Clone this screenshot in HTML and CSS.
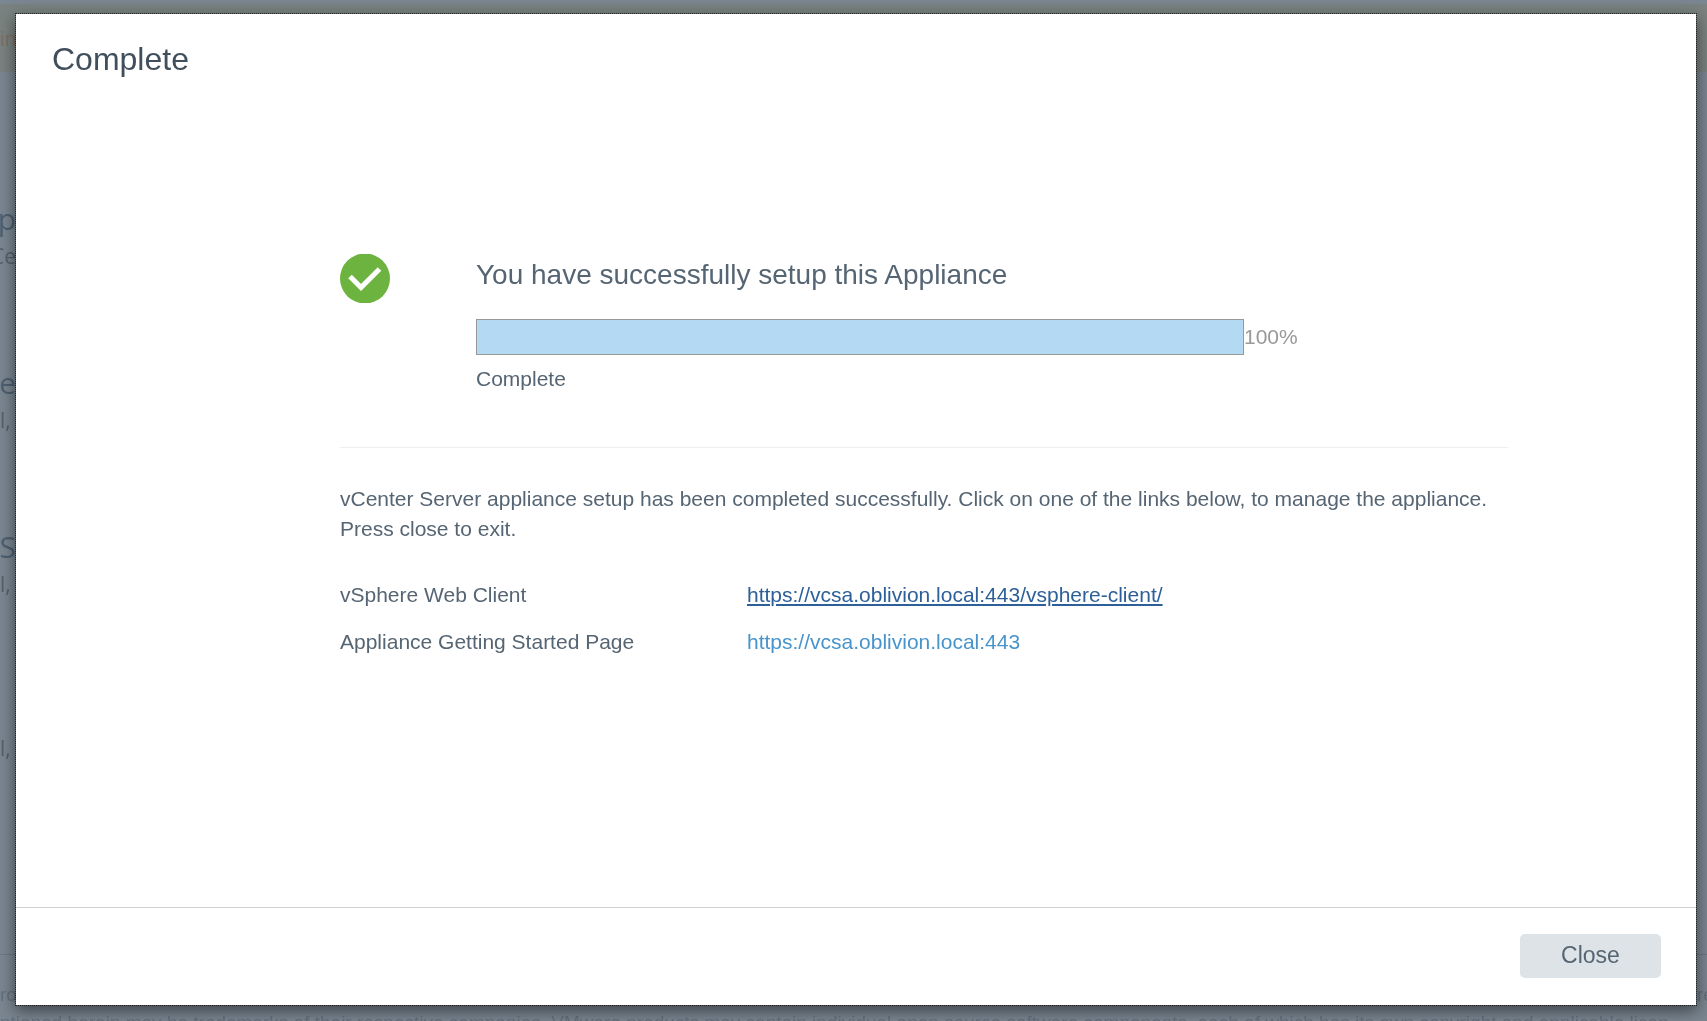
FILE: index.html
```html
<!DOCTYPE html>
<html lang="en">
<head>
<meta charset="utf-8">
<meta name="viewport" content="width=device-width, initial-scale=1">
<title>Complete</title>
<link rel="stylesheet" href="styles.css">
</head>
<body>
<div class="page" aria-hidden="true">
  <div class="banner">in</div>
  <div class="sections">
    <div class="section"><div class="heading">p</div><div class="detail detail-name">Ce</div></div>
    <div class="section"><div class="heading">e</div><div class="detail">l,</div></div>
    <div class="section"><div class="heading">S</div><div class="detail">l,</div></div>
    <div class="section"><div class="heading"></div><div class="detail">l,</div></div>
  </div>
  <div class="legal">
    <div class="legal-row"><span>ro</span><span class="legal-end">re</span></div>
    <div class="legal-text">ntioned herein may be trademarks of their respective companies. VMware products may contain individual open source software components, each of which has its own copyright and applicable licen</div>
  </div>
</div>

<div class="backdrop">
  <section class="modal" role="dialog" aria-modal="true" aria-labelledby="title">
    <header class="modal-header"><h1 id="title">Complete</h1></header>
    <main class="modal-body">
      <div class="status">
        <svg class="check" viewBox="0 0 50 49" aria-hidden="true">
          <ellipse cx="25" cy="24.5" rx="25" ry="25" fill="#6cb33f"/>
          <path d="M10 22.500L21 33.500L39.500 15" fill="none" stroke="#fff" stroke-width="5"/>
        </svg>
        <div class="status-info">
          <h2>You have successfully setup this Appliance</h2>
          <div class="progress">
            <div class="bar" role="progressbar" aria-label="Setup progress" aria-valuenow="100" aria-valuemin="0" aria-valuemax="100"><div class="fill" style="width: 100%"></div></div>
            <span class="percent">100%</span>
          </div>
          <p>Complete</p>
        </div>
      </div>
      <p class="message">vCenter Server appliance setup has been completed successfully. Click on one of the links below, to manage the appliance. Press close to exit.</p>
      <dl class="links">
        <dt>vSphere Web Client</dt>
        <dd><a class="active" href="https://vcsa.oblivion.local:443/vsphere-client/">https://vcsa.oblivion.local:443/vsphere-client/</a></dd>
        <dt>Appliance Getting Started Page</dt>
        <dd><a href="https://vcsa.oblivion.local:443">https://vcsa.oblivion.local:443</a></dd>
      </dl>
    </main>
    <footer class="modal-footer"><button type="button">Close</button></footer>
  </section>
</div>
</body>
</html>
```
FILE: styles.css
```css
* {
  box-sizing: border-box;
}

body {
  margin: 0;
  background: #7a8691;
  color: #566573;
  font: 21px/30px "Liberation Sans", Arial, sans-serif;
}

h1, h2, p, dl, dd {
  margin: 0;
  font-weight: 400;
}

/* Page behind the dialog */
.page {
  position: fixed;
  inset: 0;
  display: flex;
  flex-direction: column;
  overflow: hidden;
  padding-top: 4px;
  color: #566270;
}

.banner {
  height: 68px;
  padding-top: 20px;
  background: #7a8381;
  color: #806f63;
}

.sections {
  flex: 1;
  padding-top: 124px;
}

.section {
  height: 164px;
  font-family: "Open Sans", sans-serif;
}

.heading,
.detail-name {
  display: flex;
  justify-content: flex-end;
  width: 16px;
}

.heading {
  height: 45px;
  font-size: 30px;
  line-height: 46px;
  color: #4e6072;
}

.detail {
  color: #55606b;
}

.legal {
  height: 67px;
  padding-top: 26px;
  border-top: 1px solid #6c7884;
  font-size: 19px;
  line-height: 28px;
  color: #65717e;
}

.legal-row {
  display: flex;
  justify-content: space-between;
}

.legal-end {
  width: 10px;
}

.legal-text {
  white-space: nowrap;
}

/* Dialog */
.backdrop {
  position: relative;
  display: flex;
  min-height: 100vh;
  padding: 13px 10px 15px 15px;
}

.modal {
  flex: 1;
  display: flex;
  flex-direction: column;
  border: 1px dotted #222;
  background: #fff;
  background-clip: padding-box;
  box-shadow: 0 5px 15px rgba(0, 0, 0, 0.5);
}

.modal-header {
  padding: 25px 36px;
}

h1 {
  font-size: 32px;
  line-height: 40px;
  color: #414f5c;
}

.modal-body {
  flex: 1;
  padding: 150px 188px 32px 324px;
}

.status {
  display: flex;
  gap: 86px;
  padding-bottom: 53px;
  border-bottom: 1px solid #eee;
}

.check {
  flex: none;
  width: 50px;
  height: 49px;
}

.status-info {
  flex: 1;
}

h2 {
  font-size: 28px;
  line-height: 42px;
}

.progress {
  display: flex;
  align-items: center;
  margin: 23px 0 9px;
}

.bar {
  flex: 0 1 768px;
  height: 36px;
  border: 1px solid #999;
}

.fill {
  height: 100%;
  background: #b3d9f3;
}

.percent {
  color: #999;
}

.message {
  margin: 36px 0;
}

.links {
  display: grid;
  grid-template-columns: 407px 1fr;
  row-gap: 17px;
}

a {
  color: #4794cc;
  text-decoration: none;
}

a.active {
  color: #2d6099;
  text-decoration: underline 2px;
  text-underline-offset: 2px;
}

.modal-footer {
  display: flex;
  justify-content: flex-end;
  padding: 26px 35px 27px;
  border-top: 1px solid #ccd1d4;
}

button {
  width: 141px;
  height: 44px;
  padding: 0 0 2px;
  border: 0;
  border-radius: 5px;
  background: #dde3e6;
  color: #566573;
  font: 23px/42px "Liberation Sans", Arial, sans-serif;
}
```
